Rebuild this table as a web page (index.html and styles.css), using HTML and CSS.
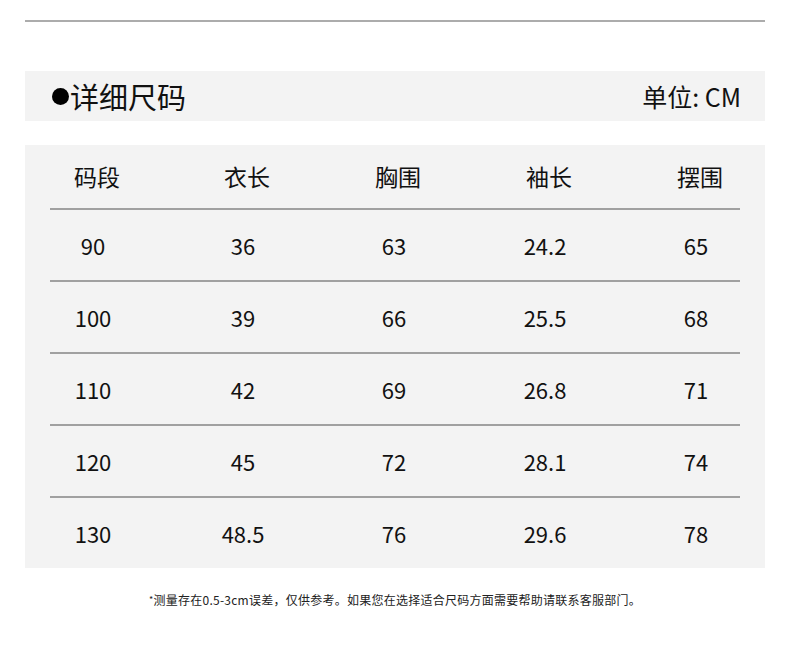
FILE: index.html
```html
<!DOCTYPE html>
<html lang="zh">
<head>
<meta charset="utf-8">
<title>详细尺码</title>
<link rel="stylesheet" href="styles.css">
</head>
<body>
<div class="page">
  <div class="rule"></div>
  <div class="band">
    <div class="title"><span class="dot"></span>详细尺码</div>
    <div class="unit">单位: CM</div>
  </div>
  <div class="panel">
    <div class="row head">
      <div class="cell">码段</div>
      <div class="cell">衣长</div>
      <div class="cell">胸围</div>
      <div class="cell">袖长</div>
      <div class="cell">摆围</div>
    </div>
    <div class="row">
      <div class="cell">90</div><div class="cell">36</div><div class="cell">63</div><div class="cell">24.2</div><div class="cell">65</div>
    </div>
    <div class="row">
      <div class="cell">100</div><div class="cell">39</div><div class="cell">66</div><div class="cell">25.5</div><div class="cell">68</div>
    </div>
    <div class="row">
      <div class="cell">110</div><div class="cell">42</div><div class="cell">69</div><div class="cell">26.8</div><div class="cell">71</div>
    </div>
    <div class="row">
      <div class="cell">120</div><div class="cell">45</div><div class="cell">72</div><div class="cell">28.1</div><div class="cell">74</div>
    </div>
    <div class="row">
      <div class="cell">130</div><div class="cell">48.5</div><div class="cell">76</div><div class="cell">29.6</div><div class="cell">78</div>
    </div>
  </div>
  <p class="note"><span class="star">*</span>测量存在0.5-3cm误差，仅供参考。如果您在选择适合尺码方面需要帮助请联系客服部门。</p>
</div>
</body>
</html>
```
FILE: styles.css
```css
html, body {
  margin: 0;
  padding: 0;
  background: #ffffff;
}
body {
  font-family: "Noto Sans CJK SC", "Noto Sans", sans-serif;
  color: #111111;
}
.page {
  width: 740px;
  padding: 20px 25px 0;
}
.rule {
  height: 2px;
  background: #acacac;
}
.band {
  margin-top: 49px;
  height: 50px;
  background: #f3f3f3;
  display: flex;
  align-items: center;
  justify-content: space-between;
  padding: 0 24px 0 27px;
}
.title {
  display: flex;
  align-items: center;
  font-size: 29px;
  line-height: 1;
}
.dot {
  width: 17px;
  height: 17px;
  border-radius: 50%;
  background: #000;
  margin-right: 1px;
}
.unit {
  font-size: 25px;
  line-height: 1;
}
.panel {
  margin-top: 24px;
  background: #f3f3f3;
  padding: 0 25px;
}
.row {
  display: grid;
  grid-template-columns: 86px 214px 88px 214px 88px;
  height: 70px;
  align-items: center;
  border-top: 2px solid #a0a0a0;
  font-size: 22px;
  line-height: 1;
}
.row.head {
  height: 63px;
  border-top: none;
  font-size: 23px;
}
.cell {
  text-align: center;
}
.head .cell {
  padding-left: 8px;
}
.note {
  margin: 24px 0 0;
  text-align: center;
  font-size: 12px;
  letter-spacing: 0.25px;
  line-height: 16px;
  color: #222;
}
.star {
  font-size: 9px;
  vertical-align: 2px;
}
```
